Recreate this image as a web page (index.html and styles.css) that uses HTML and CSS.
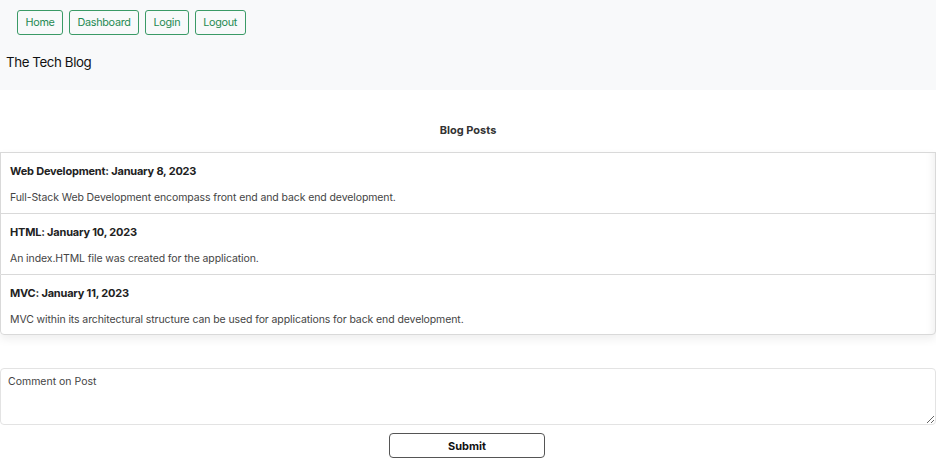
FILE: index.html
```html
<!DOCTYPE html>
<html lang="en">
<head>
<meta charset="utf-8">
<title>The Tech Blog</title>
<link rel="stylesheet" href="styles.css">
</head>
<body>
<header class="site-header">
  <nav class="nav">
    <a class="nav-btn" href="#">Home</a>
    <a class="nav-btn" href="#">Dashboard</a>
    <a class="nav-btn" href="#">Login</a>
    <a class="nav-btn" href="#">Logout</a>
  </nav>
  <h1 class="site-title">The Tech Blog</h1>
</header>
<main class="main">
  <h2 class="section-title">Blog Posts</h2>
  <div class="posts">
    <article class="post">
      <h3 class="post-title">Web Development: January 8, 2023</h3>
      <p class="post-body">Full-Stack Web Development encompass front end and back end development.</p>
    </article>
    <article class="post">
      <h3 class="post-title">HTML: January 10, 2023</h3>
      <p class="post-body">An index.HTML file was created for the application.</p>
    </article>
    <article class="post post-last">
      <h3 class="post-title">MVC: January 11, 2023</h3>
      <p class="post-body">MVC within its architectural structure can be used for applications for back end development.</p>
    </article>
  </div>
  <form class="comment-form">
    <textarea class="comment-box" placeholder="Comment on Post"></textarea>
    <button class="submit-btn" type="button">Submit</button>
  </form>
</main>
</body>
</html>
```
FILE: styles.css
```css
* { box-sizing: border-box; }
html, body { margin: 0; padding: 0; }
body {
  font-family: Inter, "Liberation Sans", Arial, sans-serif;
  color: #212529;
  background: #fff;
  width: 936px;
  overflow: hidden;
}
.site-header {
  background: #f8f9fa;
  height: 90px;
  padding: 10px 0 0 0;
}
.nav {
  display: flex;
  gap: 6px;
  padding-left: 17px;
}
.nav-btn {
  display: inline-flex;
  align-items: center;
  justify-content: center;
  height: 25px;
  padding: 0 7.5px;
  border: 1px solid #3a9a66;
  border-radius: 3px;
  color: #1f8a52;
  font-size: 10.8px;
  letter-spacing: -0.3px;
  text-decoration: none;
}
.site-title {
  margin: 17px 0 0 6px;
  font-size: 13.3px;
  letter-spacing: -0.4px;
  font-weight: 400;
  color: #111;
  line-height: 20px;
}
.main { padding: 0; }
.section-title {
  margin: 0;
  padding-top: 32px;
  height: 62px;
  text-align: center;
  font-size: 11px;
  font-weight: 700;
  line-height: 16px;
  color: #333;
}
.posts {
  box-shadow: 0 4px 10px rgba(0,0,0,0.07), inset -12px 0 10px -10px rgba(0,0,0,0.08);
  border-radius: 4px;
}
.post {
  border: 1px solid #d9d9d9;
  border-bottom: none;
  height: 61px;
  padding: 10px 9px 0 9px;
}
.post-last {
  border-bottom: 1px solid #d9d9d9;
  border-radius: 0 0 4px 4px;
}
.post-title {
  margin: 0 0 11px 0;
  font-size: 11px;
  letter-spacing: -0.2px;
  font-weight: 700;
  line-height: 16px;
  color: #222;
}
.post-body {
  margin: 0;
  font-size: 10.5px;
  letter-spacing: -0.1px;
  line-height: 16px;
  color: #444;
}
.comment-form {
  display: flex;
  flex-direction: column;
  align-items: center;
  padding-top: 33px;
}
.comment-box {
  width: 936px;
  height: 57px;
  border: 1px solid #e3e3e3;
  border-radius: 4px;
  padding: 6px 7px;
  font-family: Inter, "Liberation Sans", Arial, sans-serif;
  font-size: 10.5px;
  color: #444;
  resize: vertical;
  display: block;
}
.comment-box::placeholder { color: #444; }
.submit-btn {
  margin-top: 8px;
  margin-right: 2px;
  width: 156px;
  height: 25px;
  border: 1px solid #555;
  border-radius: 4px;
  background: #fff;
  font-family: Inter, "Liberation Sans", Arial, sans-serif;
  font-size: 11px;
  font-weight: 700;
  color: #111;
}
```
